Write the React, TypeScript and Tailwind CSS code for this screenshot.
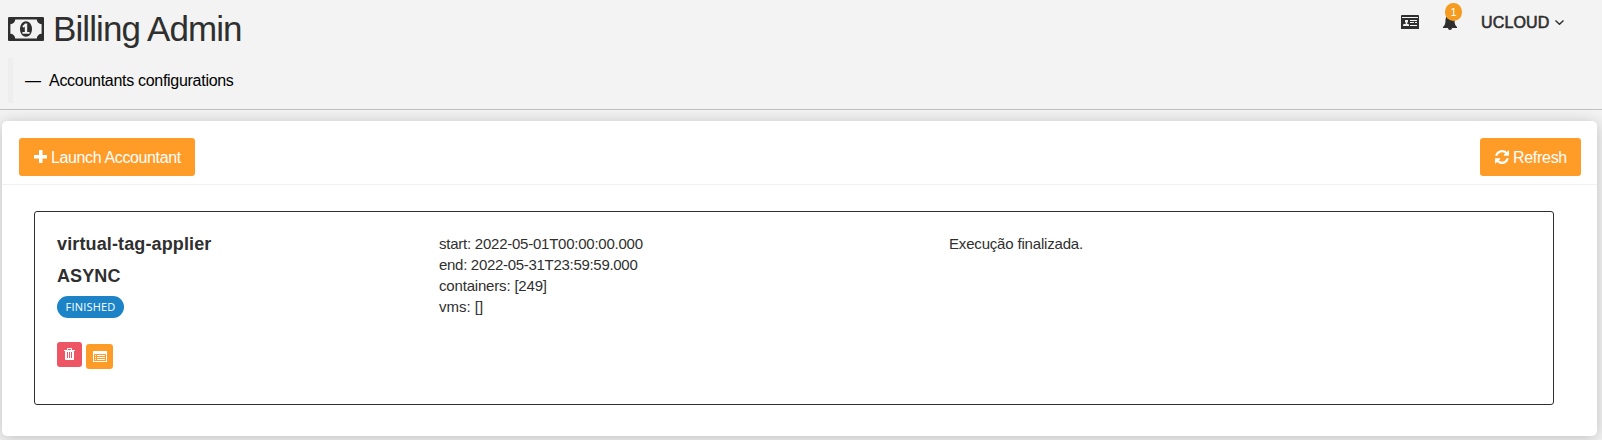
import React from "react";

const Svg = ({ box, d, className }: { box: string; d: string; className: string }) => (
  <svg viewBox={box} className={className} fill="currentColor" aria-hidden="true"><path fillRule="evenodd" d={d} /></svg>
);

const MONEY = "M768 896h384v-96h-128v-448h-114l-148 137 77 80q42-37 55-57h2v288h-128v96zm512-256q0 70-21 142t-59.5 134-101.5 101-138 39-138-39-101.5-101-59.5-134-21-142 21-142 59.5-134 101.5-101 138-39 138 39 101.5 101 59.5 134 21 142zm512 256v-512q-106 0-181-75t-75-181h-1152q0 106-75 181t-181 75v512q106 0 181 75t75 181h1152q0-106 75-181t181-75zm128-832v1152q0 26-19 45t-45 19h-1792q-26 0-45-19t-19-45v-1152q0-26 19-45t45-19h1792q26 0 45 19t19 45z";
const REFRESH = "M1511 928q0 5-1 7-64 268-268 434.5t-478 166.5q-146 0-282.5-55t-243.5-157l-129 129q-19 19-45 19t-45-19-19-45v-448q0-26 19-45t45-19h448q26 0 45 19t19 45-19 45l-137 137q71 66 161 102t187 36q134 0 250-65t186-179q11-17 53-117 8-23 30-23h192q13 0 22.5 9.5t9.5 22.5zm25-800v448q0 26-19 45t-45 19h-448q-26 0-45-19t-19-45 19-45l138-138q-148-137-349-137-134 0-250 65t-186 179q-11 17-53 117-8 23-30 23h-199q-13 0-22.5-9.5t-9.5-22.5v-7q65-268 270-434.5t480-166.5q146 0 284 55.5t245 156.5l130-129q19-19 45-19t45 19 19 45z";
const PLUS = "M5 0h3.500v5H13v3.500H8.500V13H5V8.500H0V5h5z";
const ID_CARD = "M1 0h16a1 1 0 0 1 1 1v13H0V1a1 1 0 0 1 1-1zM1 2v1h16V2zM2 11h6v-1.500L6 8.500V8l1-1V5H4v2l1 1v.500L2 9.500zM9 5v1h7V5zM9 7v1h4V7zM14 7v1h2V7zM9 10v1h7v-1z";
const BELL = "M7 0a1.200 1.200 0 0 1 1.200 1.300C10.500 1.900 11.500 4 11.500 6c0 4 .8 5.500 2.500 7v1H9a2 2 0 0 1-4 0H0v-1c1.700-1.500 2.500-3 2.500-7 0-2 1-4.100 3.300-4.700A1.200 1.200 0 0 1 7 0z";
const TRASH = "M3 2V.5L3.500 0h4L8 .5V2h3v1h-1v8.500l-.5.5h-8l-.5-.5V3H0V2zM4 1v1h3V1zM3 4v6h1V4zM5 4v6h1V4zM7 4v6h1V4z";
const LIST = "M0 0h14v11H0zM1 3v7h12V3zM2 4h1v1H2zM4 4h8v1H4zM2 6h1v1H2zM4 6h8v1H4zM2 8h1v1H2zM4 8h8v1H4z";

function Header() {
  return (
    <header className="flex h-[110px] justify-between border-b border-[#c1c1c1] pl-2">
      <div>
        <h1 className="flex h-[58px] items-center text-[35px] leading-[58px]">
          <Svg box="0 0 1920 1280" d={MONEY} className="h-6 w-9" />
          <span className="ml-[9px] tracking-[-0.9px]">Billing Admin</span>
        </h1>
        <blockquote className="flex h-[45px] items-center border-l-[5px] border-[#eee] pl-3 text-[16px] text-black">
          <span>—</span><span className="ml-2 tracking-[-0.29px]">Accountants configurations</span>
        </blockquote>
      </div>
      <nav className="flex h-11 items-center pr-[38px]">
        <Svg box="0 0 18 14" d={ID_CARD} className="h-3.5 w-[18px]" />
        <div className="relative ml-6">
          <Svg box="0 0 14 16" d={BELL} className="h-4 w-3.5" />
          <span className="absolute -top-[11px] left-[2px] flex h-[18px] w-[17px] items-center justify-center rounded-full bg-[#f49b20] text-[11px] text-white">1</span>
        </div>
        <span className="mt-px ml-6 w-[69px] text-[16px] tracking-[0.15px] whitespace-nowrap [-webkit-text-stroke:0.6px_#2f2f2f]">UCLOUD</span>
        <svg viewBox="0 0 9 5" className="ml-[5px] h-[5px] w-[9px]" fill="none" stroke="currentColor" strokeWidth="1.4"><path d="M.5.5 4.500 4.300 8.500.5" /></svg>
      </nav>
    </header>
  );
}

export default function App() {
  return (
    <div className="h-[440px] overflow-hidden bg-[#f3f3f3] font-['Liberation_Sans',Arial,sans-serif] text-[#2f2f2f]">
      <Header />
      <main className="mt-[11px] mr-[5px] ml-[2px] h-[315px] rounded-[5px] bg-white shadow-[0_2px_16px_rgba(0,0,0,0.22)]">
        <div className="flex h-16 items-start justify-between border-b border-[#f1f1f1] pt-[17px] pr-4 pl-[17px]">
          <button className="flex h-[38px] w-[176px] items-start rounded-[3px] bg-[#ff9c27] pt-3 pl-[15px] text-[16px] leading-4 text-white">
            <Svg box="0 0 13 13" d={PLUS} className="h-[13px] w-[13px]" />
            <span className="ml-1 tracking-[-0.37px] whitespace-nowrap">Launch Accountant</span>
          </button>
          <button className="flex h-[38px] w-[101px] items-start rounded-[3px] bg-[#ff9c27] pt-3 pl-[15px] text-[16px] leading-4 text-white">
            <Svg box="0 0 1536 1536" d={REFRESH} className="h-3.5 w-3.5" />
            <span className="ml-1 tracking-[-0.3px]">Refresh</span>
          </button>
        </div>
        <section className="mt-[26px] mr-[43px] ml-8 flex h-[194px] rounded-[3px] border border-[#2f2f2f] pt-[22px] pl-[22px]">
          <div className="w-[382px]">
            <h2 className="text-[18px] leading-5 font-bold tracking-[0.13px]">virtual-tag-applier</h2>
            <h2 className="mt-3 text-[18px] leading-5 font-bold tracking-[0.1px]">ASYNC</h2>
            <span className="mt-[10px] flex h-[22px] w-[67px] items-center justify-center rounded-full bg-[#1c84c6] font-['Open_Sans',sans-serif] text-[11px] tracking-[0.2px] text-white">FINISHED</span>
            <div className="mt-6 flex gap-1">
              <button className="flex h-[25px] w-[25px] items-start rounded-[3px] bg-[#ed5565] pt-1.5 pl-[7px] text-white"><Svg box="0 0 11 12" d={TRASH} className="h-3 w-[11px]" /></button>
              <button className="mt-0.5 flex h-[25px] w-[27px] items-start rounded-[3px] bg-[#ff9c27] pt-[7px] pl-[7px] text-white"><Svg box="0 0 14 11" d={LIST} className="h-[11px] w-3.5" /></button>
            </div>
          </div>
          <div className="-mt-px w-[510px] text-[15px] leading-[21px]">
            <p className="tracking-[-0.24px]">start: 2022-05-01T00:00:00.000</p>
            <p className="tracking-[-0.3px]">end: 2022-05-31T23:59:59.000</p>
            <p className="tracking-[-0.18px]">containers: [249]</p>
            <p>vms: []</p>
          </div>
          <p className="-mt-px text-[15px] leading-[21px] tracking-[-0.18px]">Execução finalizada.</p>
        </section>
      </main>
    </div>
  );
}
